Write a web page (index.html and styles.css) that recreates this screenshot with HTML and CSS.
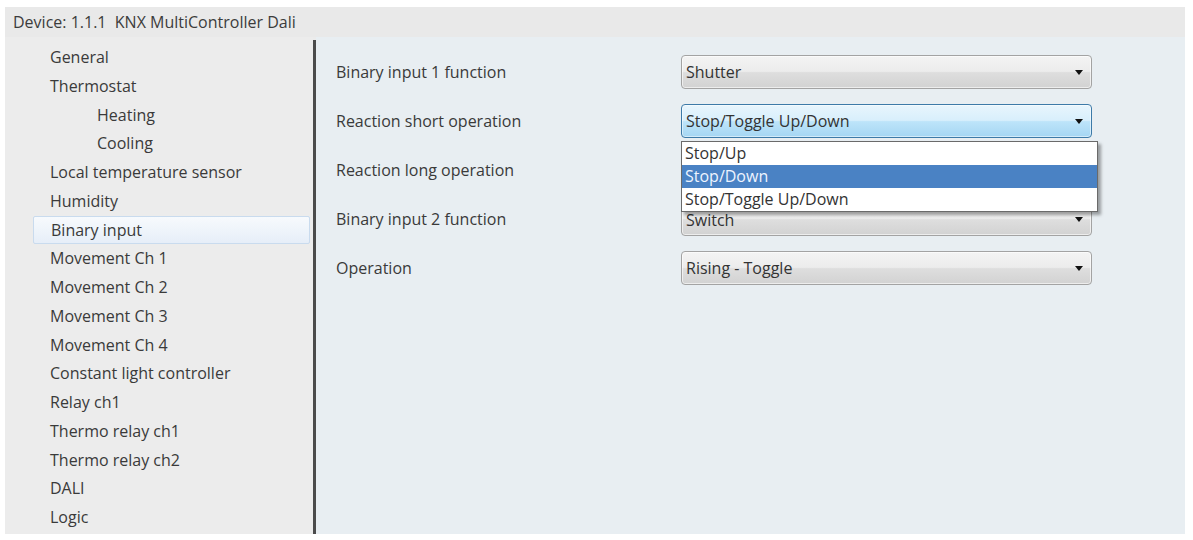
FILE: index.html
```html
<!DOCTYPE html>
<html lang="en">
<head>
<meta charset="utf-8">
<title>KNX MultiController Dali</title>
<link rel="stylesheet" href="styles.css">
</head>
<body>
<div class="window">
  <div class="header">Device: 1.1.1&nbsp; KNX MultiController Dali</div>
  <div class="main">
    <ul class="sidebar">
      <li class="item">General</li>
      <li class="item">Thermostat</li>
      <li class="item sub">Heating</li>
      <li class="item sub">Cooling</li>
      <li class="item">Local temperature sensor</li>
      <li class="item">Humidity</li>
      <li class="item selected">Binary input</li>
      <li class="item">Movement Ch 1</li>
      <li class="item">Movement Ch 2</li>
      <li class="item">Movement Ch 3</li>
      <li class="item">Movement Ch 4</li>
      <li class="item">Constant light controller</li>
      <li class="item">Relay ch1</li>
      <li class="item">Thermo relay ch1</li>
      <li class="item">Thermo relay ch2</li>
      <li class="item">DALI</li>
      <li class="item">Logic</li>
    </ul>
    <div class="divider"></div>
    <div class="content">
      <div class="row">
        <div class="label">Binary input 1 function</div>
        <div class="select"><span class="value">Shutter</span><span class="arrow"></span></div>
      </div>
      <div class="row">
        <div class="label">Reaction short operation</div>
        <div class="select focused"><span class="value">Stop/Toggle Up/Down</span><span class="arrow"></span>
          <ul class="menu">
            <li class="option">Stop/Up</li>
            <li class="option active">Stop/Down</li>
            <li class="option">Stop/Toggle Up/Down</li>
          </ul>
        </div>
      </div>
      <div class="row">
        <div class="label">Reaction long operation</div>
        <div class="select"><span class="value"></span><span class="arrow"></span></div>
      </div>
      <div class="row">
        <div class="label">Binary input 2 function</div>
        <div class="select"><span class="value low">Switch</span><span class="arrow"></span></div>
      </div>
      <div class="row">
        <div class="label">Operation</div>
        <div class="select"><span class="value">Rising - Toggle</span><span class="arrow"></span></div>
      </div>
    </div>
  </div>
</div>
</body>
</html>
```

FILE: styles.css
```css
* { box-sizing: border-box; }

html, body {
  margin: 0;
  padding: 0;
  background: #ffffff;
}

body {
  font-family: "Open Sans", "Noto Sans", "DejaVu Sans", sans-serif;
  font-size: 16px;
  color: #3a3a3a;
}

.window {
  margin: 7px 8px 0 5px;
  width: 1180px;
  height: 527px;
  display: flex;
  flex-direction: column;
  background: #ebebeb;
}

.header {
  height: 30px;
  line-height: 30px;
  padding-left: 8px;
  color: #3c3c3c;
  background: #e9e9e9;
  white-space: nowrap;
}

.main {
  flex: 1;
  display: flex;
  min-height: 0;
}

.sidebar {
  list-style: none;
  margin: 0;
  padding: 6px 0 0 0;
  width: 308px;
  flex: none;
  background: #ececec;
}

.item {
  height: 28.75px;
  line-height: 28.75px;
  padding-left: 45px;
  white-space: nowrap;
}

.item.sub {
  padding-left: 92px;
}

.item.selected {
  margin: 0 3px 0 28px;
  padding-left: 17px;
  border: 1px solid #c9dbee;
  border-radius: 2px;
  background: linear-gradient(#f7fafd, #e6eef8);
  line-height: 26.75px;
}

.divider {
  width: 3px;
  flex: none;
  margin-top: 3px;
  background: #4b4b4b;
}

.content {
  flex: 1;
  background: #e8eef2;
  padding: 18px 0 0 20px;
  display: flex;
  flex-direction: column;
  gap: 15px;
}

.row {
  display: flex;
  align-items: center;
  height: 34px;
}

.label {
  width: 345px;
  flex: none;
  white-space: nowrap;
}

.select {
  position: relative;
  width: 411px;
  height: 34px;
  border: 1px solid #a3a3a3;
  border-radius: 4px;
  background: linear-gradient(#f4f4f4 0%, #ececec 48%, #dedede 52%, #d2d2d2 100%);
  box-shadow: inset 0 0 0 1px rgba(255, 255, 255, 0.6);
  display: flex;
  align-items: center;
  justify-content: space-between;
  padding: 0 8px 0 4px;
}

.select.focused {
  border-color: #3d7aa8;
  background: linear-gradient(#e8f5fd 0%, #d8effc 48%, #bde4fa 52%, #a5d6f3 100%);
  box-shadow: inset 0 0 0 1px rgba(255, 255, 255, 0.5);
}

.value {
  white-space: nowrap;
  color: #333333;
}

.value.low {
  padding-top: 2px;
}

.arrow {
  width: 0;
  height: 0;
  border-left: 4px solid transparent;
  border-right: 4px solid transparent;
  border-top: 5px solid #111111;
}

.menu {
  position: absolute;
  z-index: 5;
  left: -1px;
  top: 36px;
  width: 417px;
  margin: 0;
  padding: 0;
  list-style: none;
  background: #ffffff;
  border: 1px solid #6a6a6a;
  box-shadow: 3px 3px 3px rgba(0, 0, 0, 0.35);
}

.option {
  height: 23px;
  line-height: 23px;
  padding-left: 3px;
  color: #333333;
  white-space: nowrap;
}

.option.active {
  background: #4a82c4;
  color: #eef4ff;
}
```
